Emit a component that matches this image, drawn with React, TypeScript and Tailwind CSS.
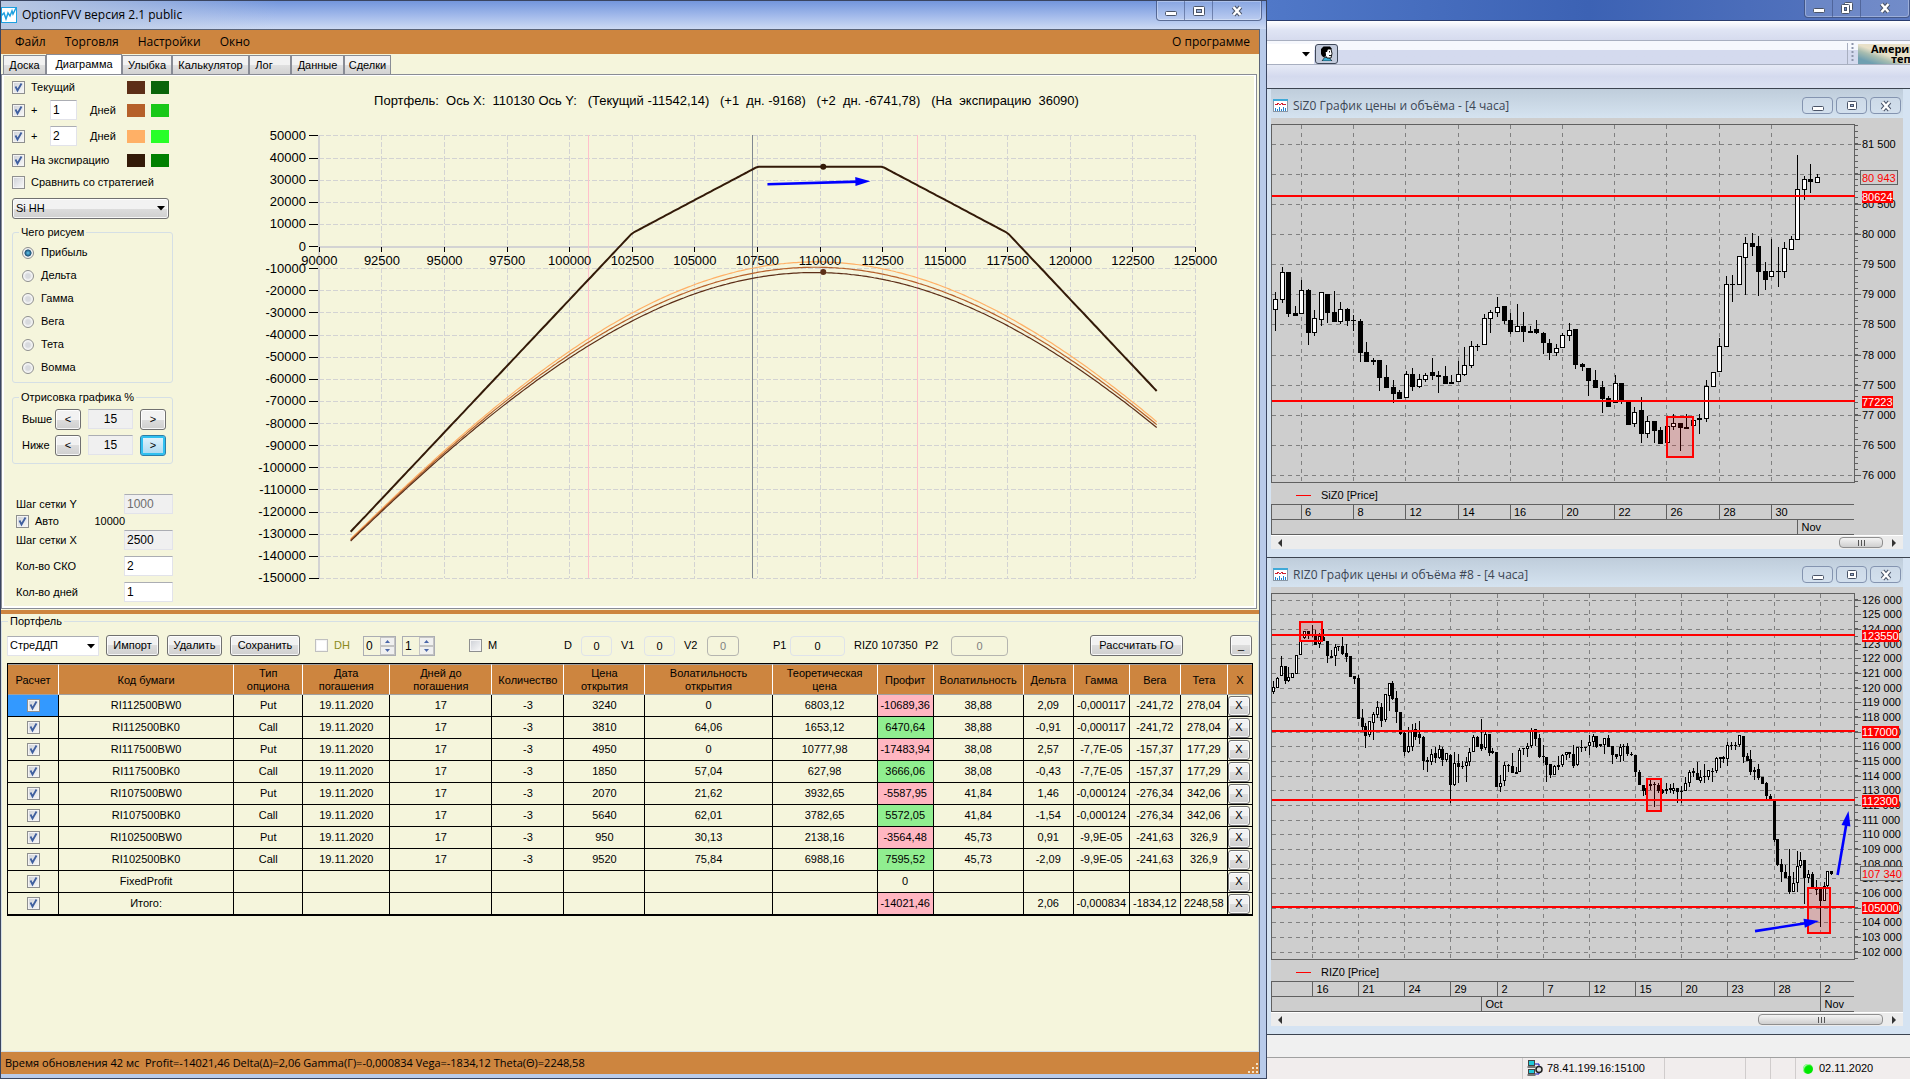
import { useState } from 'react';
import type { ReactNode } from 'react';

type Candle = [high: number, top: number, bottom: number, low: number, up?: number];

interface Row {
  code: string;
  type: string;
  date: string;
  days: string;
  qty: string;
  open: string;
  openVol: string;
  theor: string;
  profit: string;
  vol: string;
  delta: string;
  gamma: string;
  vega: string;
  theta: string;
}

const EXP = '19.11.2020';

const rows: Row[] = [
  { code: 'RI112500BW0', type: 'Put', date: EXP, days: '17', qty: '-3', open: '3240', openVol: '0', theor: '6803,12', profit: '-10689,36', vol: '38,88', delta: '2,09', gamma: '-0,000117', vega: '-241,72', theta: '278,04' },
  { code: 'RI112500BK0', type: 'Call', date: EXP, days: '17', qty: '-3', open: '3810', openVol: '64,06', theor: '1653,12', profit: '6470,64', vol: '38,88', delta: '-0,91', gamma: '-0,000117', vega: '-241,72', theta: '278,04' },
  { code: 'RI117500BW0', type: 'Put', date: EXP, days: '17', qty: '-3', open: '4950', openVol: '0', theor: '10777,98', profit: '-17483,94', vol: '38,08', delta: '2,57', gamma: '-7,7E-05', vega: '-157,37', theta: '177,29' },
  { code: 'RI117500BK0', type: 'Call', date: EXP, days: '17', qty: '-3', open: '1850', openVol: '57,04', theor: '627,98', profit: '3666,06', vol: '38,08', delta: '-0,43', gamma: '-7,7E-05', vega: '-157,37', theta: '177,29' },
  { code: 'RI107500BW0', type: 'Put', date: EXP, days: '17', qty: '-3', open: '2070', openVol: '21,62', theor: '3932,65', profit: '-5587,95', vol: '41,84', delta: '1,46', gamma: '-0,000124', vega: '-276,34', theta: '342,06' },
  { code: 'RI107500BK0', type: 'Call', date: EXP, days: '17', qty: '-3', open: '5640', openVol: '62,01', theor: '3782,65', profit: '5572,05', vol: '41,84', delta: '-1,54', gamma: '-0,000124', vega: '-276,34', theta: '342,06' },
  { code: 'RI102500BW0', type: 'Put', date: EXP, days: '17', qty: '-3', open: '950', openVol: '30,13', theor: '2138,16', profit: '-3564,48', vol: '45,73', delta: '0,91', gamma: '-9,9E-05', vega: '-241,63', theta: '326,9' },
  { code: 'RI102500BK0', type: 'Call', date: EXP, days: '17', qty: '-3', open: '9520', openVol: '75,84', theor: '6988,16', profit: '7595,52', vol: '45,73', delta: '-2,09', gamma: '-9,9E-05', vega: '-241,63', theta: '326,9' },
  { code: 'FixedProfit', type: '', date: '', days: '', qty: '', open: '', openVol: '', theor: '', profit: '0', vol: '', delta: '', gamma: '', vega: '', theta: '' },
  { code: 'Итого:', type: '', date: '', days: '', qty: '', open: '', openVol: '', theor: '', profit: '-14021,46', vol: '', delta: '2,06', gamma: '-0,000834', vega: '-1834,12', theta: '2248,58' },
];

const siCandles: Candle[] = [
  [292, 299, 310, 331, 1], [267, 272, 300, 303, 1], [272, 272, 314, 317], [306, 313, 316, 316], [280, 290, 314, 314, 1],
  [289, 290, 333, 345], [310, 318, 333, 336, 1], [292, 292, 320, 326, 1], [294, 294, 313, 323], [291, 312, 322, 322],
  [302, 309, 322, 324, 1], [308, 309, 321, 326], [315, 320, 321, 331], [319, 321, 353, 362], [342, 352, 362, 362],
  [358, 360, 362, 365], [360, 360, 378, 391], [365, 377, 388, 388], [380, 387, 394, 403], [390, 392, 399, 399],
  [371, 374, 398, 398, 1], [368, 374, 387, 391], [374, 379, 387, 388, 1], [373, 375, 380, 382, 1], [358, 372, 376, 380],
  [371, 375, 377, 393], [366, 376, 384, 384], [375, 382, 384, 384], [361, 374, 382, 382, 1], [347, 365, 375, 376, 1],
  [341, 346, 366, 368, 1], [344, 346, 347, 351], [314, 318, 345, 345, 1], [310, 312, 319, 333, 1], [297, 307, 313, 317, 1],
  [306, 306, 321, 324], [313, 320, 332, 334], [304, 326, 332, 332, 1], [312, 326, 332, 342], [326, 331, 333, 333],
  [320, 329, 333, 334], [332, 333, 343, 354], [339, 343, 353, 360], [344, 348, 353, 356, 1], [333, 335, 348, 348, 1],
  [323, 330, 336, 341, 1], [329, 329, 365, 369], [363, 364, 367, 371], [368, 368, 381, 396], [370, 380, 388, 388],
  [381, 387, 399, 413], [396, 398, 407, 407], [375, 383, 403, 403, 1], [383, 383, 402, 404], [402, 402, 425, 425],
  [407, 412, 424, 427, 1], [397, 410, 434, 443], [416, 421, 434, 438, 1], [421, 421, 431, 443], [427, 430, 444, 444],
  [424, 426, 443, 443, 1], [414, 423, 427, 430, 1], [423, 423, 428, 451], [414, 427, 429, 429], [417, 420, 426, 437, 1],
  [414, 418, 420, 434], [380, 386, 419, 422, 1], [372, 372, 387, 387, 1], [338, 346, 372, 372, 1], [276, 284, 347, 347, 1],
  [275, 284, 285, 302], [256, 256, 285, 285, 1], [237, 243, 258, 295, 1], [233, 243, 247, 256], [236, 246, 272, 296],
  [262, 271, 280, 290], [239, 271, 277, 277, 1], [247, 271, 272, 287], [242, 248, 272, 278, 1], [236, 239, 250, 250, 1],
  [155, 189, 240, 240, 1], [176, 179, 190, 200, 1], [164, 179, 182, 193], [174, 177, 183, 183, 1],
];

const riCandles: Candle[] = [
  [681, 687, 692, 694, 1], [677, 678, 688, 688, 1], [656, 666, 676, 676, 1], [666, 666, 681, 684], [667, 677, 681, 682, 1],
  [673, 673, 678, 678, 1], [655, 655, 674, 674, 1], [639, 641, 655, 655, 1], [631, 631, 638, 639, 1], [631, 631, 634, 639],
  [625, 634, 636, 637], [630, 635, 645, 645], [633, 636, 644, 648, 1], [629, 637, 641, 641], [641, 641, 656, 663],
  [650, 656, 658, 658], [644, 647, 656, 666, 1], [646, 646, 647, 651], [637, 646, 654, 655], [644, 653, 657, 662],
  [656, 656, 677, 677], [676, 676, 679, 684], [675, 678, 719, 719], [709, 718, 727, 731], [723, 726, 736, 748],
  [721, 721, 735, 737, 1], [712, 714, 723, 740, 1], [701, 707, 715, 718, 1], [703, 707, 721, 727], [694, 694, 720, 722, 1],
  [683, 683, 696, 711, 1], [681, 683, 699, 700], [691, 698, 712, 723], [712, 712, 734, 735], [732, 733, 752, 756],
  [727, 746, 752, 753, 1], [724, 730, 747, 751, 1], [723, 729, 737, 740], [721, 734, 738, 744], [736, 737, 761, 770],
  [757, 760, 762, 772], [749, 754, 762, 765, 1], [747, 753, 758, 763], [745, 749, 758, 759, 1], [747, 749, 760, 766],
  [753, 753, 760, 762, 1], [754, 755, 785, 803], [752, 763, 785, 786, 1], [754, 763, 767, 783], [761, 766, 767, 769],
  [757, 762, 766, 782, 1], [748, 752, 762, 766, 1], [735, 737, 752, 752, 1], [736, 737, 747, 747], [719, 744, 749, 751],
  [732, 734, 748, 750, 1], [734, 734, 753, 756], [748, 751, 753, 754], [752, 752, 787, 787], [775, 783, 787, 792, 1],
  [762, 765, 781, 786, 1], [764, 765, 766, 772], [753, 766, 773, 773], [767, 772, 774, 774, 1], [748, 750, 772, 772, 1],
  [748, 748, 749, 755], [743, 746, 749, 757, 1], [728, 730, 746, 748, 1], [729, 729, 739, 746], [734, 738, 757, 758],
  [745, 756, 757, 763], [757, 757, 765, 782], [764, 764, 775, 778], [765, 766, 775, 775, 1], [756, 765, 767, 770],
  [754, 755, 765, 767, 1], [752, 752, 755, 760, 1], [752, 752, 754, 758], [745, 754, 766, 768], [747, 747, 765, 766, 1],
  [740, 747, 748, 752], [747, 747, 748, 751], [735, 742, 746, 755, 1], [734, 736, 742, 747, 1], [736, 736, 747, 748],
  [744, 744, 746, 747], [738, 738, 745, 754, 1], [735, 738, 747, 747], [746, 746, 755, 764], [754, 754, 757, 759],
  [744, 747, 756, 762, 1], [744, 746, 747, 761], [743, 746, 754, 756], [752, 754, 755, 756], [755, 755, 772, 777],
  [770, 772, 785, 785], [785, 785, 791, 796], [783, 788, 795, 797], [780, 784, 786, 790], [782, 784, 785, 807],
  [783, 785, 791, 793], [789, 790, 793, 794], [783, 789, 791, 794, 1], [784, 788, 790, 793], [783, 788, 791, 794, 1],
  [788, 788, 792, 803], [786, 791, 792, 803], [777, 783, 791, 791, 1], [770, 772, 783, 787, 1], [768, 771, 773, 777],
  [762, 773, 780, 780], [770, 777, 781, 783, 1], [764, 776, 777, 783], [770, 770, 777, 780, 1], [768, 771, 772, 782],
  [757, 758, 771, 773, 1], [757, 757, 759, 768], [756, 757, 759, 763], [742, 745, 759, 766, 1], [742, 745, 746, 750],
  [742, 745, 746, 750], [735, 735, 745, 747, 1], [736, 736, 757, 763], [753, 756, 761, 761], [750, 759, 772, 775],
  [767, 770, 772, 780, 1], [764, 769, 778, 780], [777, 777, 784, 784], [782, 783, 796, 799], [794, 796, 800, 800],
  [801, 801, 840, 842], [839, 839, 865, 866], [859, 864, 872, 882], [865, 872, 878, 878], [849, 876, 892, 894],
  [872, 883, 892, 892, 1], [851, 866, 883, 892, 1], [852, 860, 866, 868, 1], [860, 860, 878, 904], [870, 874, 878, 883, 1],
  [872, 874, 888, 888], [880, 888, 890, 895], [889, 889, 901, 927], [882, 886, 901, 901, 1], [871, 871, 886, 887, 1],
  [871, 871, 874, 875],
];

// normal cdf, Abramowitz-Stegun
function cdf(x: number): number {
  const t = 1 / (1 + 0.2316419 * Math.abs(x));
  const d = 0.3989423 * Math.exp((-x * x) / 2);
  const p = d * t * (0.3193815 + t * (-0.3565638 + t * (1.781478 + t * (-1.821256 + t * 1.330274))));
  return x > 0 ? 1 - p : p;
}

const legs = [
  { strike: 102500, vol: 0.4573 },
  { strike: 107500, vol: 0.4184 },
  { strike: 112500, vol: 0.3888 },
  { strike: 117500, vol: 0.3808 },
];

// three short straddles on each strike, 96090 premium received
function profitAt(price: number, days: number): number {
  return legs.reduce((sum, { strike, vol }) => {
    if (days === 0) return sum - 3 * Math.abs(price - strike);
    const sd = vol * Math.sqrt(days / 365);
    const d1 = Math.log(price / strike) / sd + sd / 2;
    const call = price * cdf(d1) - strike * cdf(d1 - sd);
    return sum - 3 * (2 * call - price + strike);
  }, 96090);
}

const px = (v: number) => 319.5 + ((v - 90000) * 62.64) / 2500;
const py = (v: number) => 246.5 - v * 0.002214;

function curve(days: number): string {
  const pts: string[] = [];
  for (let p = 91250; p <= 123450; p += 100) {
    pts.push(`${px(p).toFixed(1)},${py(profitAt(p, days)).toFixed(1)}`);
  }
  return pts.join(' ');
}

function Arrow({ x1, y1, x2, y2 }: { x1: number; y1: number; x2: number; y2: number }) {
  const angle = (Math.atan2(y2 - y1, x2 - x1) * 180) / Math.PI;
  const len = Math.hypot(x2 - x1, y2 - y1);
  return (
    <g transform={`translate(${x1} ${y1}) rotate(${angle})`} fill="#0000ff">
      <rect x="0" y="-1.2" width={len - 12} height="2.6" />
      <path d={`M${len - 15} -4.5 L${len} 0 L${len - 15} 4.5 Z`} />
    </g>
  );
}

function PayoffChart() {
  const ys = Array.from({ length: 21 }, (_, i) => 50000 - i * 10000);
  const xs = Array.from({ length: 15 }, (_, i) => 90000 + i * 2500);
  return (
    <svg viewBox="176 76 1079 530" className="w-full h-[530px]" fontFamily="'Liberation Sans', sans-serif">
      <text x="727" y="105" fontSize="13" textAnchor="middle" style={{ whiteSpace: 'pre' }}>
        {'Портфель:  Ось X:  110130 Ось Y:   (Текущий -11542,14)   (+1  дн. -9168)   (+2  дн. -6741,78)   (На  экспирацию  36090)'}
      </text>
      {ys.map((v) => (
        <g key={v}>
          <line x1={319} x2={1196} y1={py(v)} y2={py(v)} stroke="#d3d3d3" strokeDasharray={v === 0 ? undefined : '5 2'} strokeWidth={v === 0 ? 2 : 1} shapeRendering="crispEdges" />
          <line x1={309} x2={319} y1={py(v)} y2={py(v)} stroke="#000" shapeRendering="crispEdges" />
        </g>
      ))}
      {xs.map((v) => (
        <g key={v} shapeRendering="crispEdges">
          <line x1={px(v)} x2={px(v)} y1={135} y2={578} stroke="#d3d3d3" strokeDasharray={v === 90000 ? undefined : '5 2'} strokeWidth={v === 90000 ? 2 : 1} />
          <line x1={px(v)} x2={px(v)} y1={247} y2={252} stroke="#000" />
        </g>
      ))}
      <g shapeRendering="crispEdges">
        <line x1="588.5" x2="588.5" y1="135" y2="578" stroke="#ffc0cb" />
        <line x1="918.5" x2="918.5" y1="135" y2="578" stroke="#ffc0cb" />
        <line x1="753.5" x2="753.5" y1="135" y2="578" stroke="#808890" />
      </g>
      <polyline points={curve(15)} fill="none" stroke="#ffb066" strokeWidth="1.2" />
      <polyline points={curve(16)} fill="none" stroke="#b5602a" strokeWidth="1.2" />
      <polyline points={curve(17)} fill="none" stroke="#5c2e17" strokeWidth="1.2" />
      <polyline points={curve(0)} fill="none" stroke="#331a08" strokeWidth="2" />
      <circle cx={px(110130)} cy={py(36090)} r="3" fill="#331a08" />
      <circle cx={px(110130)} cy={py(-11542)} r="3" fill="#5c2e17" />
      {ys.map((v) => (
        <text key={v} x="306" y={py(v) + 4} fontSize="13" textAnchor="end">{v}</text>
      ))}
      {xs.map((v) => (
        <text key={v} x={px(v)} y="265" fontSize="13" textAnchor="middle">{v}</text>
      ))}
      <Arrow x1={768} y1={184} x2={871} y2={181} />
    </svg>
  );
}

interface PriceChartProps {
  top: number;
  height: number;
  plot: [number, number];
  candles: Candle[];
  first: number;
  step: number;
  body: number;
  prices: { from: number; to: number; by: number; y: number; dy: number; minor: number };
  gridX: number[];
  days: string[];
  months: { x: number; label: string }[];
  levels: { y: number; label: string }[];
  boxes: [number, number, number, number][];
  last: { y: number; label: string };
  legend: string;
  children?: ReactNode;
}

function PriceChart(p: PriceChartProps) {
  const labels: { y: number; text: string }[] = [];
  for (let v = p.prices.from, y = p.prices.y; v >= p.prices.to; v -= p.prices.by, y += p.prices.dy) {
    const s = String(v);
    labels.push({ y: Math.round(y), text: `${s.slice(0, -3)} ${s.slice(-3)}` });
  }
  const [y0, y1] = p.plot;
  const minorStep = p.prices.dy / p.prices.minor;
  const minors: number[] = [];
  for (let y = p.prices.y; y < y1; y += minorStep) minors.push(y);
  for (let y = p.prices.y - minorStep; y > y0; y -= minorStep) minors.push(y);
  return (
    <svg viewBox={`1271 ${p.top} 632 ${p.height}`} className="block w-full" fontFamily="'Liberation Sans', sans-serif" fontSize="12">
      <rect x="1271" y={p.top} width="632" height={p.height} fill="#cecece" />
      <g stroke="#808080" strokeDasharray="4 4" shapeRendering="crispEdges">
        {labels.map((l) => <line key={l.text} x1="1272" x2="1854" y1={l.y} y2={l.y} />)}
        {p.gridX.map((x) => <line key={x} x1={x} x2={x} y1={y0} y2={y1} />)}
      </g>
      <g stroke="#606060" shapeRendering="crispEdges" fill="none">
        <rect x="1271.5" y={y0} width="583" height={y1 - y0} />
        {minors.map((y) => <line key={y} x1="1855" x2="1858" y1={y} y2={y} />)}
        {labels.map((l) => <line key={l.text} x1="1855" x2="1861" y1={l.y} y2={l.y} />)}
        <path d={`M1271.5 ${y1 + 52} V${y1 + 21.5} H1854 M1271 ${y1 + 36.5} H1854 M1271 ${y1 + 51.5} H1854`} />
        {p.gridX.map((x) => <line key={x} x1={x} x2={x} y1={y1 + 22} y2={y1 + 36} />)}
        {p.months.map((m) => <line key={m.x} x1={m.x} x2={m.x} y1={y1 + 37} y2={y1 + 51} />)}
      </g>
      {labels.map((l) => <text key={l.text} x="1862" y={l.y + 4} fontSize="11">{l.text}</text>)}
      {p.gridX.map((x, i) => <text key={x} x={x + 4} y={y1 + 33} fontSize="11">{p.days[i]}</text>)}
      {p.months.map((m) => <text key={m.x} x={m.x + 4} y={y1 + 48} fontSize="11">{m.label}</text>)}
      <line x1="1296" x2="1311" y1={y1 + 13} y2={y1 + 13} stroke="#f00" shapeRendering="crispEdges" />
      <text x="1321" y={y1 + 16} fontSize="11">{p.legend}</text>
      {p.candles.map(([h, t, b, l, up], i) => {
        const x = Math.round(p.first + i * p.step);
        return (
          <g key={i} shapeRendering="crispEdges">
            <rect x={x} y={h} width="1" height={Math.max(l - h, 1)} fill="#000" />
            <rect x={x - (p.body - 1) / 2} y={t} width={p.body} height={Math.max(b - t, 1)} fill="#000" />
            {up && b - t > 2 && <rect x={x - (p.body - 3) / 2} y={t + 1} width={p.body - 2} height={b - t - 2} fill="#fff" />}
          </g>
        );
      })}
      {p.boxes.map(([x, y, w, h]) => (
        <rect key={x} x={x} y={y} width={w} height={h} fill="#f00" fillOpacity="0.15" stroke="#f00" strokeWidth="2" />
      ))}
      {p.levels.map((l) => (
        <g key={l.y}>
          <rect x="1272" y={l.y - 1} width="583" height="2" fill="#f00" />
          <rect x="1862" y={l.y - 5} width={l.label.length * 6 + 1} height="12" fill="#f00" />
          <text x="1862" y={l.y + 5} fontSize="11" fill="#fff">{l.label}</text>
        </g>
      ))}
      <rect x="1860.5" y={p.last.y - 7.5} width={p.last.label.length * 6 + 1} height="14" fill="#cecece" stroke="#606060" />
      <text x="1862" y={p.last.y + 4} fontSize="11" fill="#f00">{p.last.label}</text>
      {p.children}
    </svg>
  );
}

function ChartIcon() {
  return (
    <svg width="15" height="13" viewBox="0 0 15 13" shapeRendering="crispEdges">
      <rect x="0.5" y="0.5" width="14" height="12" fill="#fff" stroke="#8a97a5" />
      <rect width="15" height="2" fill="#3fa9d8" />
      <path d="M2 5.5h2l1-1.5 2 2 2-2 1 1.5h3" stroke="#d02030" fill="none" />
      <path d="M2.500 12v-3M4.500 12v-2M6.500 12v-4M8.500 12v-2M10.500 12v-4M12.500 12v-3" stroke="#2080d0" />
    </svg>
  );
}

const MinGlyph = () => (
  <svg width="12" height="12" viewBox="0 0 12 12"><rect x="0.5" y="6.500" width="11" height="4" rx="1" fill="#fff" stroke="#4a5468" /></svg>
);
const MaxGlyph = () => (
  <svg width="12" height="12" viewBox="0 0 12 12" stroke="#4a5468">
    <rect x="0.5" y="1.500" width="11" height="9" rx="1" fill="#fff" />
    <rect x="3.500" y="4.500" width="5" height="3" fill="#9bb0d6" />
  </svg>
);
const SmallMaxGlyph = () => (
  <svg width="10" height="10" viewBox="0 0 10 10" stroke="#4a5468">
    <rect x="0.5" y="0.500" width="9" height="8" rx="1" fill="#fff" />
    <rect x="3.500" y="3.500" width="3" height="2" fill="#9bb0d6" />
  </svg>
);
const RestoreGlyph = () => (
  <svg width="12" height="12" viewBox="0 0 12 12" stroke="#4a5468">
    <rect x="3.500" y="0.500" width="8" height="8" rx="1" fill="#fff" />
    <rect x="0.500" y="2.500" width="8" height="9" rx="1" fill="#fff" />
    <rect x="3.500" y="5.500" width="2" height="3" fill="#6f8fd0" />
  </svg>
);
const CloseGlyph = () => (
  <svg width="12" height="12" viewBox="0 0 12 12">
    <path d="M2.500 2 L9.500 10 M9.500 2 L2.500 10" stroke="#4a5468" strokeWidth="4.500" />
    <path d="M2.500 2 L9.500 10 M9.500 2 L2.500 10" stroke="#fff" strokeWidth="2.500" />
  </svg>
);

function WindowButtons({ restore = false }: { restore?: boolean }) {
  return (
    <div className="flex h-5 rounded-b border border-t-0 border-[#33446f]/70 bg-white/15 shadow-[inset_0_0_0_1px_rgba(255,255,255,0.3)]">
      <button aria-label="Свернуть" className="flex w-7 items-center justify-center border-r border-[#33446f]/50"><MinGlyph /></button>
      <button aria-label="Развернуть" className="flex w-7 items-center justify-center border-r border-[#33446f]/50">{restore ? <RestoreGlyph /> : <MaxGlyph />}</button>
      <button aria-label="Закрыть" className="flex w-12 items-center justify-center"><CloseGlyph /></button>
    </div>
  );
}

function MdiWindow({ title, thumb, children }: { title: string; thumb: 'small' | 'large'; children: ReactNode }) {
  const btn = 'flex h-[17px] w-[31px] items-center justify-center rounded-sm border border-[#8494b0] bg-[#d4e0ee]/50';
  const thumbClass = 'flex h-[11px] items-center justify-center rounded-sm border border-[#8f8f8f] bg-linear-to-b from-[#f4f4f4] to-[#cfcfcf]';
  return (
    <section className="border-t border-[#3c4450] bg-[#d5e3f2] pr-[7px] pl-1">
      <header className="flex h-[29px] items-center gap-[3px] bg-linear-to-b from-[#bfcddb] to-[#d5e3f0] pt-1 pl-[2px]">
        <ChartIcon />
        <h2 className="ml-[2px] flex-1 text-xs text-[#3c4654]">{title}</h2>
        <button aria-label="Свернуть" className={btn}><MinGlyph /></button>
        <button aria-label="Развернуть" className={btn}><SmallMaxGlyph /></button>
        <button aria-label="Закрыть" className={btn + ' mr-[2px]'}><CloseGlyph /></button>
      </header>
      {children}
      <div className="mb-2 flex h-[14px] items-center justify-between border-t border-white bg-[#ececec] px-1.5">
        <button aria-label="Влево"><svg width="5" height="8"><path d="M5 0 L1 4 L5 8 Z" fill="#333" /></svg></button>
        <div className="flex flex-1 justify-end pr-[9px]">
          <div className={thumb === 'small' ? thumbClass + ' w-11' : thumbClass + ' w-[125px]'}>
            <svg width="8" height="6"><path d="M1.500 0v6M4.500 0v6M7.500 0v6" stroke="#555" /></svg>
          </div>
        </div>
        <button aria-label="Вправо"><svg width="5" height="8"><path d="M0 0 L4 4 L0 8 Z" fill="#333" /></svg></button>
      </div>
    </section>
  );
}

function Check({ id, checked = false, label, disabled }: { id: string; checked?: boolean; label: string; disabled?: boolean }) {
  const [on, setOn] = useState(checked);
  return (
    <span className="relative inline-flex h-[13px] w-[13px] shrink-0">
      <input
        id={id}
        type="checkbox"
        aria-label={label}
        checked={on}
        disabled={disabled}
        onChange={() => setOn(!on)}
        className="h-[13px] w-[13px] appearance-none border border-[#8e8f8f] bg-linear-to-br from-[#cdd0d6] to-[#fafafa] shadow-[inset_0_0_0_1px_#f4f4f4] disabled:border-[#c0c0c0] disabled:from-white disabled:to-white"
      />
      {on && (
        <svg className="pointer-events-none absolute inset-0" viewBox="0 0 13 13">
          <path d="M3.500 5.500 L5.500 9.500 L9.500 2.500" stroke="#3f5f9f" strokeWidth="1.800" fill="none" />
        </svg>
      )}
    </span>
  );
}

const textBox = 'border border-[#e2e3ea] border-t-[#abadb3] bg-white px-[2px] text-xs leading-none';
const grayBox = 'border border-[#e2e3ea] border-t-[#abadb3] bg-[#f0f0f0] px-[2px] text-xs leading-none';
const toolBox = 'h-5 rounded-sm border border-[#dfe3ea] bg-transparent text-center text-[11px]';
const toolBoxOff = 'h-5 rounded-sm border border-[#b5b5b0] bg-transparent text-center text-[11px] text-[#808080]';
const winButton = 'rounded-[3px] border border-[#707070] bg-linear-to-b from-[#f2f2f2] from-50% via-[#dddddd] via-50% to-[#cfcfcf] text-center shadow-[inset_0_0_0_1px_rgba(255,255,255,0.8)]';

function Swatches({ left, right }: { left: string; right: string }) {
  return (
    <span className="ml-auto flex gap-1.5 pr-1">
      <span className="h-[13px] w-[18px]" style={{ background: left }} />
      <span className="h-[13px] w-[18px]" style={{ background: right }} />
    </span>
  );
}

function Sidebar() {
  const [mode, setMode] = useState('Прибыль');
  return (
    <aside className="w-[172px] shrink-0 pr-[3px] pb-[2px] pl-2 text-[11px]">
      <div className="flex h-[22px] items-center gap-1.5">
        <Check id="cur" checked label="Текущий" />
        <label htmlFor="cur">Текущий</label>
        <Swatches left="#5c2e17" right="#0a640a" />
      </div>
      <div className="flex h-6 items-center">
        <Check id="d1" checked label="+ 1 день" />
        <span className="w-[25px] pl-1.5">+</span>
        <input aria-label="Дней 1" defaultValue="1" className={textBox + ' h-5 w-[27px]'} />
        <span className="pl-[13px]">Дней</span>
        <Swatches left="#b5602a" right="#18c818" />
      </div>
      <div className="flex h-7 items-center">
        <Check id="d2" checked label="+ 2 дня" />
        <span className="w-[25px] pl-1.5">+</span>
        <input aria-label="Дней 2" defaultValue="2" className={textBox + ' h-5 w-[27px]'} />
        <span className="pl-[13px]">Дней</span>
        <Swatches left="#ffb066" right="#28ff28" />
      </div>
      <div className="flex h-5 items-center gap-1.5">
        <Check id="exp" checked label="На экспирацию" />
        <label htmlFor="exp">На экспирацию</label>
        <Swatches left="#331a08" right="#008000" />
      </div>
      <div className="flex h-[25px] items-center gap-1.5">
        <Check id="cmp" label="Сравнить со стратегией" />
        <label htmlFor="cmp" className="whitespace-nowrap">Сравнить со стратегией</label>
      </div>
      <div className="relative mt-[3px] mr-1">
        <select aria-label="Стратегия" className={winButton + ' h-[21px] w-full appearance-none pl-[3px] text-left'}>
          <option>Si HH</option>
        </select>
        <svg className="pointer-events-none absolute top-2 right-1" width="8" height="5"><path d="M0 0h8L4 4.500z" /></svg>
      </div>
      <fieldset className="mt-[5px] rounded-[3px] border border-[#d5dfe5] pt-px pb-[3px] pl-[9px]">
        <legend className="-ml-[3px] px-[2px] leading-4">Чего рисуем</legend>
        {['Прибыль', 'Дельта', 'Гамма', 'Вега', 'Тета', 'Вомма'].map((m) => (
          <label key={m} className="flex h-[23px] items-center gap-[7px]">
            <input
              type="radio"
              name="mode"
              checked={mode === m}
              onChange={() => setMode(m)}
              className="h-3 w-3 appearance-none rounded-full border border-[#8e8f8f] bg-[radial-gradient(circle,#d8dade_30%,#f6f6f6_60%)] checked:bg-[radial-gradient(circle,#5fc8f0_0%,#1c4f74_45%,#f4f4f4_55%)]"
            />
            {m}
          </label>
        ))}
      </fieldset>
      <fieldset className="mt-1.5 rounded-[3px] border border-[#d5dfe5] pt-px pb-[5px] pl-[9px]">
        <legend className="-ml-[3px] px-[2px] leading-4">Отрисовка графика %</legend>
        <div className="flex h-[26px] items-center">
          <label htmlFor="hi" className="w-[33px]">Выше</label>
          <button className={winButton + ' h-[21px] w-[26px]'}>&lt;</button>
          <input id="hi" defaultValue="15" className={grayBox + ' mx-[7px] h-5 w-[45px] text-center'} />
          <button className={winButton + ' h-[21px] w-[26px]'}>&gt;</button>
        </div>
        <div className="flex h-[26px] items-center">
          <label htmlFor="lo" className="w-[33px]">Ниже</label>
          <button className={winButton + ' h-[21px] w-[26px]'}>&lt;</button>
          <input id="lo" defaultValue="15" className={grayBox + ' mx-[7px] h-5 w-[45px] text-center'} />
          <button className="h-[21px] w-[26px] rounded-[3px] border border-[#2c7ea8] bg-linear-to-b from-[#e4f4fc] to-[#a8d8f0] text-center shadow-[inset_0_0_0_2px_#30c0f0]">&gt;</button>
        </div>
      </fieldset>
      <div className="mt-[30px] flex h-5 items-center justify-between pl-1">
        <label htmlFor="gy">Шаг сетки Y</label>
        <input id="gy" disabled defaultValue="1000" className={grayBox + ' h-5 w-[49px] border-[#abadb3] text-[#6d6d6d]'} />
      </div>
      <div className="flex h-[15px] items-center gap-1.5 pl-1">
        <Check id="auto" checked label="Авто" />
        <label htmlFor="auto">Авто</label>
        <span className="ml-auto pr-12">10000</span>
      </div>
      <div className="mt-px flex flex-col gap-1.5 pl-1">
        <div className="flex h-5 items-center justify-between">
          <label htmlFor="gx">Шаг сетки X</label>
          <input id="gx" defaultValue="2500" className={grayBox + ' h-5 w-[49px]'} />
        </div>
        <div className="flex h-5 items-center justify-between">
          <label htmlFor="sko">Кол-во СКО</label>
          <input id="sko" defaultValue="2" className={textBox + ' h-5 w-[49px]'} />
        </div>
        <div className="flex h-5 items-center justify-between">
          <label htmlFor="nd">Кол-во дней</label>
          <input id="nd" defaultValue="1" className={textBox + ' h-5 w-[49px]'} />
        </div>
      </div>
    </aside>
  );
}

function Spin({ label, value }: { label: string; value: string }) {
  return (
    <span className="flex h-5 w-[33px] border border-[#abadb3]">
      <input aria-label={label} defaultValue={value} className="w-4 min-w-0 pl-[2px] text-xs" />
      <span className="flex flex-1 flex-col bg-[#f0f0f0] text-[#4a66a8]">
        <button aria-label="Больше" className="flex flex-1 items-center justify-center border border-[#c4c4c4]"><svg width="5" height="3"><path d="M0 3h5L2.500 0z" fill="currentColor" /></svg></button>
        <button aria-label="Меньше" className="flex flex-1 items-center justify-center border border-[#c4c4c4]"><svg width="5" height="3"><path d="M0 0h5L2.500 3z" fill="currentColor" /></svg></button>
      </span>
    </span>
  );
}

function Toolbar() {
  return (
    <div className="flex h-[23px] items-center pl-[5px] text-[11px]">
      <div className="relative mr-[7px]">
        <select aria-label="Портфель" className="h-5 w-[92px] appearance-none border border-[#e2e3ea] border-t-[#abadb3] bg-white pl-[2px] text-[11px]">
          <option>СтреДДП</option>
        </select>
        <svg className="pointer-events-none absolute top-2 right-1" width="8" height="5"><path d="M0 0h8L4 4.500z" /></svg>
      </div>
      <button className={winButton + ' h-[21px] w-[53px]'}>Импорт</button>
      <button className={winButton + ' ml-2 h-[21px] w-[55px]'}>Удалить</button>
      <button className={winButton + ' ml-2 h-[21px] w-[70px]'}>Сохранить</button>
      <span className="ml-[15px] flex"><Check id="dh" label="DH" disabled /></span>
      <label htmlFor="dh" className="w-[35px] pl-1.5 text-[#8a8a20]">DH</label>
      <Spin label="DH от" value="0" />
      <span className="w-1.5" />
      <Spin label="DH до" value="1" />
      <span className="ml-[34px] flex"><Check id="m" label="M" /></span>
      <label htmlFor="m" className="w-[82px] pl-1.5">M</label>
      <label htmlFor="td" className="w-[17px]">D</label>
      <input id="td" defaultValue="0" className={toolBox + ' w-[31px]'} />
      <label htmlFor="v1" className="w-8 pl-[9px]">V1</label>
      <input id="v1" defaultValue="0" className={toolBox + ' w-[31px]'} />
      <label htmlFor="v2" className="w-8 pl-[9px]">V2</label>
      <input id="v2" defaultValue="0" disabled className={toolBoxOff + ' w-8'} />
      <label htmlFor="p1" className="ml-[34px] w-[17px]">P1</label>
      <input id="p1" defaultValue="0" className={toolBox + ' w-[55px]'} />
      <span className="ml-[9px] w-[71px]">RIZ0 107350</span>
      <label htmlFor="p2" className="w-[26px]">P2</label>
      <input id="p2" defaultValue="0" disabled className={toolBoxOff + ' w-[57px]'} />
      <button className={winButton + ' ml-auto h-[21px] w-[93px]'}>Рассчитать ГО</button>
      <button className={winButton + ' mr-1.5 ml-[47px] h-[21px] w-[22px]'}>_</button>
    </div>
  );
}

const columns = [
  { title: 'Расчет', w: 'w-[51px]' },
  { title: 'Код бумаги', w: 'w-[175px]' },
  { title: 'Тип опциона', w: 'w-[69px]' },
  { title: 'Дата погашения', w: 'w-[87px]' },
  { title: 'Дней до погашения', w: 'w-[102px]' },
  { title: 'Количество', w: 'w-[72px]' },
  { title: 'Цена открытия', w: 'w-[81px]' },
  { title: 'Волатильность открытия', w: 'w-[127px]' },
  { title: 'Теоретическая цена', w: 'w-[105px]' },
  { title: 'Профит', w: 'w-[56px]' },
  { title: 'Волатильность', w: 'w-[90px]' },
  { title: 'Дельта', w: 'w-[50px]' },
  { title: 'Гамма', w: 'w-[56px]' },
  { title: 'Вега', w: 'w-[51px]' },
  { title: 'Тета', w: 'w-[47px]' },
  { title: 'X', w: 'w-[24px]' },
];

function profitClass(v: string): string {
  if (v === '0') return '';
  return v.startsWith('-') ? 'bg-[#ffb6c1]' : 'bg-[#90ee90]';
}

function PortfolioTable() {
  const cell = 'h-[22px] border-r border-b border-black p-0';
  return (
    <div className="mr-[5px] ml-[5px] flex-1 border border-black">
      <table className="w-full table-fixed border-separate border-spacing-0 text-center text-[11px] leading-[13px]">
        <colgroup>
          {columns.map((c) => <col key={c.title} className={c.w} />)}
        </colgroup>
        <thead>
          <tr>
            {columns.map((c) => (
              <th key={c.title} className="h-[31px] border-t border-r border-b border-t-[#a0a0a0] border-r-white border-b-[#a0a0a0] bg-[#cd853f] p-0 pt-px font-normal last:border-r-0">
                <span className={c.title.includes(' ') && c.title !== 'Код бумаги' ? 'mx-auto block w-min' : 'whitespace-nowrap'}>
                  {c.title === 'Дней до погашения' ? <>Дней&nbsp;до погашения</> : c.title}
                </span>
              </th>
            ))}
          </tr>
        </thead>
        <tbody>
          {rows.map((r, i) => (
            <tr key={r.code}>
              <td className={i === 0 ? cell + ' bg-[#3399ff]' : cell}>
                <span className="flex justify-center"><Check id={'row' + i} checked label={r.code} /></span>
              </td>
              <td className={cell}>{r.code}</td>
              <td className={cell}>{r.type}</td>
              <td className={cell}>{r.date}</td>
              <td className={cell}>{r.days}</td>
              <td className={cell}>{r.qty}</td>
              <td className={cell}>{r.open}</td>
              <td className={cell}>{r.openVol}</td>
              <td className={cell}>{r.theor}</td>
              <td className={cell + ' ' + profitClass(r.profit)}>{r.profit}</td>
              <td className={cell}>{r.vol}</td>
              <td className={cell}>{r.delta}</td>
              <td className={cell}>{r.gamma}</td>
              <td className={cell}>{r.vega}</td>
              <td className={cell}>{r.theta}</td>
              <td className="border-b border-black p-0">
                <button aria-label={'Удалить ' + r.code} className={winButton + ' block h-5 w-[22px]'}>X</button>
              </td>
            </tr>
          ))}
        </tbody>
      </table>
    </div>
  );
}

const tabClass = 'h-[19px] border border-b-0 border-[#898c95] bg-linear-to-b from-[#f2f2f2] from-50% via-[#e0e0e0] via-50% to-[#d2d2d2] pt-px text-center';

function OptionWindow() {
  return (
    <main className="flex min-h-screen flex-col border border-[#3a4560] bg-[#b9cbea] pr-1.5 pb-1">
      <header className="-mr-1.5 flex h-7 justify-between bg-linear-to-b from-[#7396dc] via-[#a0b8ea] to-[#cddaf3] font-['Open_Sans',sans-serif]">
        <div className="flex items-center gap-[5px] bg-linear-to-r from-[#b9c8e2] to-transparent pr-24">
          <svg width="16" height="16" viewBox="0 0 16 16">
            <rect x="0.500" y="0.500" width="15" height="15" fill="#fff" stroke="#1ea0e0" />
            <path d="M0 9 L3 6 L5 12 L7 6 L9 9 L11 4 L12 7 L15 1" stroke="#1ea0e0" strokeWidth="1.500" fill="none" />
          </svg>
          <h1 className="text-xs">OptionFVV версия 2.1 public</h1>
        </div>
        <div className="pr-1"><WindowButtons /></div>
      </header>
      <div className="flex flex-1 flex-col border-t border-r border-[#5a6478] bg-[#f5f5dc]">
        <nav className="flex h-6 items-center gap-[19px] bg-[#cd853f] pr-[9px] pl-[14px] font-['Open_Sans',sans-serif] text-xs">
          <button>Файл</button>
          <button>Торговля</button>
          <button>Настройки</button>
          <button>Окно</button>
          <button className="ml-auto">О программе</button>
        </nav>
        <div className="flex h-5 items-end pl-[2px] text-[11px]" role="tablist">
          <button role="tab" className={tabClass + ' w-[43px]'}>Доска</button>
          <button role="tab" aria-selected className="h-5 w-[76px] border border-b-0 border-[#898c95] bg-white">Диаграмма</button>
          <button role="tab" className={tabClass + ' w-[50px]'}>Улыбка</button>
          <button role="tab" className={tabClass + ' w-[77px]'}>Калькулятор</button>
          <button role="tab" className={tabClass + ' w-[42px] pr-3'}>Лог</button>
          <button role="tab" className={tabClass + ' w-[53px]'}>Данные</button>
          <button role="tab" className={tabClass + ' w-[47px]'}>Сделки</button>
        </div>
        <div className="mr-[2px] border border-[#898c95]">
          <div className="flex border-2 border-t border-white">
            <Sidebar />
            <div className="min-w-0 flex-1"><PayoffChart /></div>
          </div>
        </div>
        <div className="mt-px h-1 bg-[#cd853f]" />
        <fieldset className="flex min-w-0 flex-1 flex-col border border-[#d5dfe5] pb-px">
          <legend className="ml-1.5 px-[2px] text-[11px] leading-[14px]">Портфель</legend>
          <div className="pt-1.5 pb-[6px]"><Toolbar /></div>
          <PortfolioTable />
        </fieldset>
        <footer className="flex h-[22px] items-center justify-between bg-[#cd853f] pl-1 font-['Open_Sans',sans-serif] text-[11px]">
          <span className="whitespace-pre">Время обновления 42 мс  Profit=-14021,46 Delta(Δ)=2,06 Gamma(Γ)=-0,000834 Vega=-1834,12 Theta(Θ)=2248,58</span>
          <svg width="12" height="12" className="self-end" viewBox="0 0 12 12" fill="#f3e2c8">
            <path d="M9 1h2v2h-2zM9 5h2v2h-2zM5 5h2v2h-2zM9 9h2v2h-2zM5 9h2v2h-2zM1 9h2v2h-2z" />
          </svg>
        </footer>
      </div>
    </main>
  );
}

function BackgroundApp() {
  const siGrid = [1301, 1353.5, 1405.5, 1458.5, 1510, 1562.5, 1614.5, 1666.5, 1719.5, 1771.5];
  const riGrid = [1312.5, 1358.5, 1404.5, 1450.5, 1497.5, 1543.5, 1589.5, 1635.5, 1681.5, 1727.5, 1774.5, 1820.5];
  return (
    <div className="flex min-h-screen min-w-0 flex-col overflow-hidden bg-[#f0f0f0] font-['Open_Sans',sans-serif]">
      <header className="flex h-[21px] justify-end border-b border-[#2a3d6e] bg-linear-to-r from-[#5078c8] via-[#3c62b4] to-[#5a78c0]">
        <div className="-mt-[2px]"><WindowButtons restore /></div>
      </header>
      <div className="h-5 border-b border-[#a8afc0] bg-linear-to-b from-white via-[#dfe4f4] to-[#d6dbee]" />
      <div className="flex h-6 items-center border-b border-[#a8afc0] bg-linear-to-b from-[#f6f8fd] from-40% via-[#d4daee] via-40% to-[#d4daee] pt-[2px]">
        <div className="relative">
          <select aria-label="Класс" className="block h-5 w-[47px] appearance-none bg-white" />
          <svg className="pointer-events-none absolute top-2 right-1" width="8" height="5"><path d="M0 0h8L4 4.500z" /></svg>
        </div>
        <button aria-label="Профиль" className="ml-px flex h-5 w-[23px] items-center justify-center rounded-[3px] border border-[#3f4858] bg-[#c3cbdc]">
          <svg width="14" height="15" viewBox="0 0 14 15">
            <path d="M2 15 L4.500 11.500 H9 L12 15 Z" fill="#38b0d8" stroke="#000" strokeWidth="0.600" />
            <path d="M5 3 H11 L12 7.500 L11 12 H7 L5 9 Z" fill="#fff" stroke="#000" strokeWidth="0.900" />
            <path d="M1 8 V3 L3.500 0.500 H10 L12 3 H8 L7 6 H5.500 L6 9 L4 11.500 L2 10 Z" fill="#000" />
            <path d="M9.500 5v1.500M9 9.500h2.500" stroke="#000" strokeWidth="0.900" />
          </svg>
        </button>
        <div className="ml-auto h-full border-l border-[#a8afc0] pl-[3px]">
          <svg width="3" height="20"><path d="M1.500 0v20" stroke="#8d95ab" strokeWidth="2" strokeDasharray="2 2" /></svg>
        </div>
        <div className="ml-1 h-5 w-[52px] overflow-hidden bg-[linear-gradient(20deg,#6f9fb0_15%,#a8bdb0_35%,#e8e0c8_50%)] pl-[13px] text-[11px] leading-[10px] font-bold whitespace-nowrap">
          <div>Америк</div>
          <div className="pl-5">теп</div>
        </div>
      </div>
      <div className="h-[23px] bg-linear-to-b from-[#e6eaf6] via-[#d4daee] to-[#dce2f2]" />
      <MdiWindow title="SiZ0 График цены и объёма - [4 часа]" thumb="small">
        <PriceChart
          top={118}
          height={417}
          plot={[124.5, 482.5]}
          candles={siCandles}
          first={1275}
          step={6.53}
          body={5}
          prices={{ from: 81500, to: 76000, by: 500, y: 143.5, dy: 30.16, minor: 5 }}
          gridX={siGrid}
          days={['6', '8', '12', '14', '16', '20', '22', '26', '28', '30']}
          months={[{ x: 1797.5, label: 'Nov' }]}
          levels={[{ y: 196, label: '80624' }, { y: 401, label: '77223' }]}
          boxes={[[1667, 417, 26, 40]]}
          last={{ y: 178, label: '80 943' }}
          legend="SiZ0 [Price]"
        />
      </MdiWindow>
      <MdiWindow title="RIZ0 График цены и объёма #8 - [4 часа]" thumb="large">
        <PriceChart
          top={587}
          height={425}
          plot={[593.5, 959.5]}
          candles={riCandles}
          first={1273}
          step={3.85}
          body={3}
          prices={{ from: 126000, to: 102000, by: 1000, y: 599.5, dy: 14.67, minor: 2 }}
          gridX={riGrid}
          days={['16', '21', '24', '29', '2', '7', '12', '15', '20', '23', '28', '2']}
          months={[{ x: 1481.5, label: 'Oct' }, { x: 1820.5, label: 'Nov' }]}
          levels={[{ y: 635, label: '123550' }, { y: 731, label: '117000' }, { y: 800, label: '112300' }, { y: 907, label: '105000' }]}
          boxes={[[1300, 622, 22, 19], [1647, 779, 14, 32], [1808, 888, 22, 45]]}
          last={{ y: 874, label: '107 340' }}
          legend="RIZ0 [Price]"
        >
          <Arrow x1={1755} y1={931} x2={1819} y2={921} />
          <Arrow x1={1837.5} y1={875} x2={1848.5} y2={811} />
        </PriceChart>
      </MdiWindow>
      <div className="flex-1 border-t border-[#3c4450] bg-[#f0f0f0]" />
      <footer className="flex h-[22px] items-center border-t border-[#a0a0a0] bg-[#f1eded] font-['Liberation_Sans',sans-serif] text-[11px]">
        <div className="ml-auto flex h-full w-[142px] items-center gap-1 border-l border-[#d0cccc] pl-1">
          <svg width="16" height="17" viewBox="0 0 16 17">
            <path d="M7 4 H12 V7 M7 14 H12 V12" stroke="#1010c0" fill="none" />
            <rect x="1.500" y="0.500" width="6" height="5" fill="#20c8d8" stroke="#444" />
            <rect x="0.500" y="6" width="8" height="2" fill="#777" />
            <rect x="1.500" y="9.500" width="6" height="4" fill="#20c8d8" stroke="#444" />
            <rect x="0.500" y="14" width="8" height="2" fill="#777" />
            <circle cx="12" cy="9.500" r="3" fill="#ddd" stroke="#222" strokeWidth="1.500" />
          </svg>
          <span>78.41.199.16:15100</span>
        </div>
        <div className="h-full w-[81px] border-l border-[#d0cccc]" />
        <div className="h-full w-[25px] border-l border-[#d0cccc]" />
        <div className="h-full w-[25px] border-l border-[#d0cccc]" />
        <div className="flex h-full w-[115px] items-center gap-1.5 border-l border-[#d0cccc] pl-[7px]">
          <span className="h-[10px] w-[10px] rounded-full bg-[#00e800] shadow-[inset_1px_1px_1px_#b0ffb0]" />
          <span>02.11.2020</span>
        </div>
      </footer>
    </div>
  );
}

export default function App() {
  return (
    <div className="grid min-h-screen grid-cols-[1267fr_643fr] overflow-hidden font-['Liberation_Sans',sans-serif] text-black">
      <OptionWindow />
      <BackgroundApp />
    </div>
  );
}
